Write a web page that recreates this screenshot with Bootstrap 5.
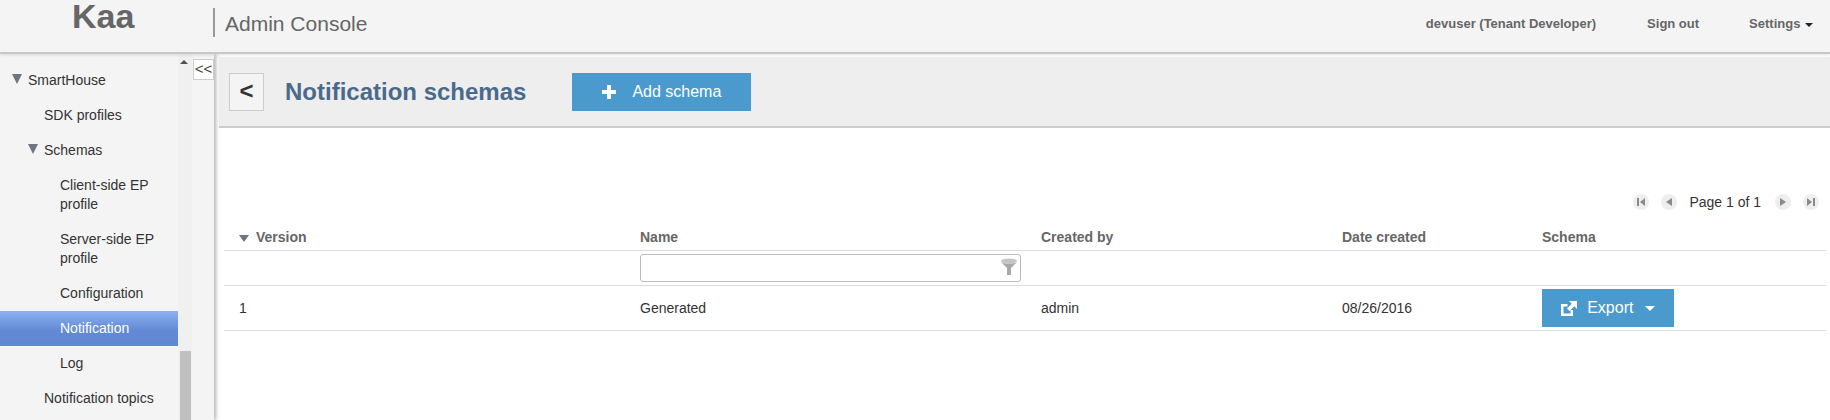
<!DOCTYPE html>
<html lang="en">
<head>
  <meta charset="UTF-8" />
  <title>Kaa Admin Console</title>
  <link href="https://cdn.jsdelivr.net/npm/bootstrap@5.3.3/dist/css/bootstrap.min.css" rel="stylesheet" />
  <style>
    html, body { height: 420px; overflow: hidden; }
    body { font-family: "Liberation Sans", Arial, sans-serif; font-size: 14px; color: #333; background: #fff; }
    .top-bar { height: 54px; background: #f4f4f4; border-bottom: 2px solid #c8c8c8; color: #666; position: relative; z-index: 2; box-shadow: 0 1px 3px rgba(0,0,0,.12); }
    .brand-box { width: 213px; padding-bottom: 21px; }
    .brand-name { font-size: 34px; font-weight: 700; line-height: 1; padding-left: 72px; color: #666; }
    .console-name { border-left: 2px solid #999; height: 29px; margin-bottom: 7px; padding-left: 10px; font-size: 21px; line-height: 31px; }
    .top-links { font-size: 13px; font-weight: 700; height: 42px; margin-bottom: 4px; }
    .top-user { margin-right: 51px; }
    .top-signout { margin-right: 50px; }
    .top-settings { margin-right: 17px; }
    .caret-down { display: inline-block; border-left: 4px solid transparent; border-right: 4px solid transparent; border-top: 4px solid #222; vertical-align: middle; margin-left: 1px; }
    .page-body { height: 366px; }
    .side-wrap { width: 214px; background: #f4f4f4; flex-shrink: 0; position: relative; z-index: 1; box-shadow: 2px 0 4px rgba(0,0,0,.3); }
    .side-list { width: 178px; list-style: none; margin: 0; padding: 9px 0 0; }
    .side-list li { padding: 8px 10px 8px 0; line-height: 19px; position: relative; }
    .lvl-1 { padding-left: 28px !important; }
    .lvl-2 { padding-left: 44px !important; }
    .lvl-3 { padding-left: 60px !important; }
    .side-list li.is-active { color: #fff; background: linear-gradient(#8cb2f2, #628ad4 55%, #5f88d3); }
    .tri-open { position: absolute; top: 11px; width: 0; height: 0; border-left: 5px solid transparent; border-right: 5px solid transparent; border-top: 10px solid #6b7584; }
    .lvl-1 .tri-open { left: 12px; }
    .lvl-2 .tri-open { left: 28px; }
    .side-scroll { width: 14px; background: #f0f0f0; position: relative; }
    .side-scroll-up { position: absolute; left: 2px; top: 6px; border-left: 4px solid transparent; border-right: 4px solid transparent; border-top: 0; border-bottom: 4px solid #505050; }
    .side-thumb { position: absolute; left: 2px; top: 297px; width: 11px; height: 80px; background: #c0c0c0; }
    .collapse-btn { width: 21px; height: 21px; margin: 5px 0 0 1px; border: 1px solid #ccc; background: #fff; font-size: 15px; line-height: 17px; text-align: center; color: #444; }
    .main-pane { padding: 3px 0 0 5px; min-width: 0; }
    .title-bar { height: 71px; background: #eee; border-bottom: 2px solid #ccc; padding: 1px 0 0 10px; }
    .back-btn { width: 35px; height: 38px; border: 1px solid #ccc; background: #f4f4f4; font-size: 24px; font-weight: 700; line-height: 33px; text-align: center; color: #333; }
    .page-title { font-size: 24px; font-weight: 700; color: #4a6a8a; margin: 0 46px 0 21px; }
    .blue-btn { background: #4a9ace; color: #fff; font-size: 16px; border: 0; border-radius: 0; height: 38px; }
    .add-btn { width: 179px; padding: 0 0 0 30px; }
    .add-btn svg { margin-right: 16px; }
    .pager-row { height: 36px; margin-top: 56px; padding-right: 11px; font-size: 14px; }
    .pg-btn { width: 16px; height: 16px; border-radius: 50%; background: #eee; margin-left: 12px; }
    .pager-label { margin: 0 2px 0 12px; }
    .data-table { margin: 9px 0 0 5px; width: 1602px; table-layout: fixed; border-collapse: collapse; }
    .data-table th { color: #666; font-weight: 700; height: 21px; line-height: 16px; padding: 0 15px 5px; border-bottom: 1px solid #ddd; }
    .data-table td { padding: 0 15px; vertical-align: middle; border-bottom: 1px solid #ddd; }
    .filter-row td { height: 35px; }
    .value-row td { height: 45px; }
    .sort-tri { display: inline-block; width: 0; height: 0; border-left: 5px solid transparent; border-right: 5px solid transparent; border-top: 7px solid #6b7584; margin-right: 7px; }
    .filter-box { position: relative; width: 381px; }
    .filter-input { width: 381px; height: 28px; border: 1px solid #bbb; border-radius: 3px; display: block; }
    .filter-icon { position: absolute; right: 3px; top: 4px; }
    .export-btn { width: 132px; padding: 0; }
    .export-btn svg { margin-right: 10px; }
    .export-caret { display: inline-block; border-left: 5px solid transparent; border-right: 5px solid transparent; border-top: 5px solid #fff; vertical-align: middle; margin-left: 7px; }
  </style>
</head>
<body>
  <header class="top-bar d-flex align-items-center">
    <div class="brand-box"><div class="brand-name">Kaa</div></div>
    <div class="console-name">Admin Console</div>
    <div class="top-links ms-auto d-flex align-items-center">
      <span class="top-user">devuser (Tenant Developer)</span>
      <span class="top-signout">Sign out</span>
      <span class="top-settings">Settings <span class="caret-down"></span></span>
    </div>
  </header>

  <div class="page-body d-flex">
    <aside class="side-wrap d-flex">
      <ul class="side-list">
        <li class="lvl-1"><span class="tri-open"></span>SmartHouse</li>
        <li class="lvl-2">SDK profiles</li>
        <li class="lvl-2"><span class="tri-open"></span>Schemas</li>
        <li class="lvl-3">Client-side EP profile</li>
        <li class="lvl-3">Server-side EP profile</li>
        <li class="lvl-3">Configuration</li>
        <li class="lvl-3 is-active">Notification</li>
        <li class="lvl-3">Log</li>
        <li class="lvl-2">Notification topics</li>
      </ul>
      <div class="side-scroll"><span class="side-scroll-up"></span><span class="side-thumb"></span></div>
      <div class="collapse-btn">&lt;&lt;</div>
    </aside>

    <main class="main-pane flex-grow-1">
      <div class="title-bar d-flex align-items-center">
        <div class="back-btn">&lt;</div>
        <h1 class="page-title">Notification schemas</h1>
        <button class="btn blue-btn add-btn d-flex align-items-center" type="button">
          <svg width="14" height="14" viewBox="0 0 14 14"><path fill="#fff" d="M5 0h4v5h5v4H9v5H5V9H0V5h5z"/></svg>Add schema
        </button>
      </div>

      <div class="pager-row d-flex align-items-center justify-content-end">
        <span class="pg-btn d-flex align-items-center justify-content-center"><svg width="12" height="12" viewBox="0 0 12 12"><path fill="#8a8a8a" d="M2 2h2v8H2zM10 2v8L5 6z"/></svg></span>
        <span class="pg-btn d-flex align-items-center justify-content-center"><svg width="12" height="12" viewBox="0 0 12 12"><path fill="#8a8a8a" d="M9 2v8L3 6z"/></svg></span>
        <span class="pager-label">Page 1 of 1</span>
        <span class="pg-btn d-flex align-items-center justify-content-center"><svg width="12" height="12" viewBox="0 0 12 12"><path fill="#8a8a8a" d="M3 2v8l6-4z"/></svg></span>
        <span class="pg-btn d-flex align-items-center justify-content-center"><svg width="12" height="12" viewBox="0 0 12 12"><path fill="#8a8a8a" d="M8 2h2v8H8zM2 2v8l5-4z"/></svg></span>
      </div>

      <table class="data-table">
        <colgroup><col width="401"><col width="401"><col width="301"><col width="200"><col width="299"></colgroup>
        <thead>
          <tr><th><span class="sort-tri"></span>Version</th><th>Name</th><th>Created by</th><th>Date created</th><th>Schema</th></tr>
        </thead>
        <tbody>
          <tr class="filter-row">
            <td></td>
            <td><div class="filter-box"><input class="filter-input" type="text" />
              <svg class="filter-icon" width="18" height="18" viewBox="0 0 18 18"><ellipse cx="9" cy="3" rx="8" ry="2.500" fill="#c4c4c4"/><path fill="#a8a8a8" d="M1 4c3 2 13 2 16 0l-6 6v7H7v-7z"/></svg></div></td>
            <td></td><td></td><td></td>
          </tr>
          <tr class="value-row">
            <td>1</td><td>Generated</td><td>admin</td><td>08/26/2016</td>
            <td><button class="btn blue-btn export-btn" type="button">
              <svg width="16" height="15" viewBox="0 0 16 15"><path fill="#fff" d="M8 0h8v8l-2.700-2.700L8.500 10 6 7.500l4.800-4.800zM0 3h6.500v2.500h-4v7h7V9H12v6H0z"/></svg>Export <span class="export-caret"></span>
            </button></td>
          </tr>
        </tbody>
      </table>
    </main>
  </div>

  <script src="https://cdn.jsdelivr.net/npm/bootstrap@5.3.3/dist/js/bootstrap.bundle.min.js"></script>
</body>
</html>
